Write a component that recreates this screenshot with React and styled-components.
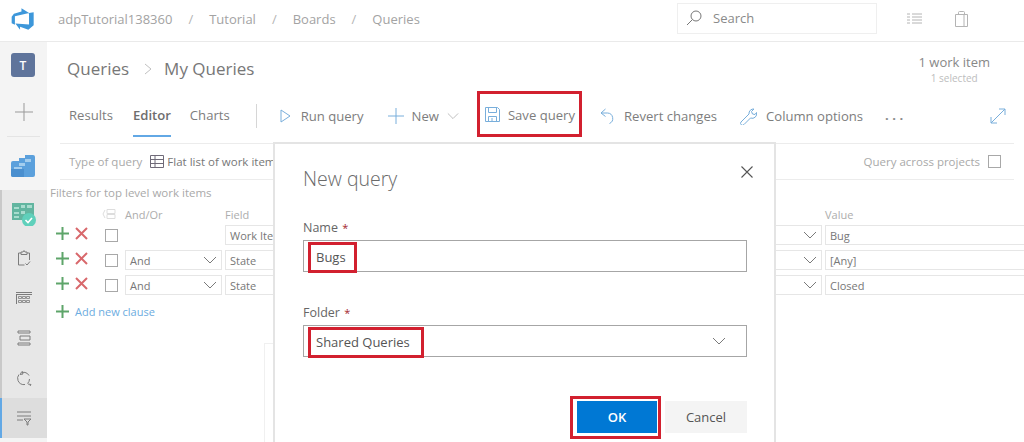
import React from 'react';
import styled, { createGlobalStyle } from 'styled-components';

const GlobalStyle = createGlobalStyle`
  html, body {
    margin: 0;
    padding: 0;
    background: #fff;
    font-family: "Open Sans", "Liberation Sans", sans-serif;
  }
  * { box-sizing: border-box; }
`;

/*********************************** Page frame ***********************************/
const Page = styled.div`
  position: relative;
  width: 1024px;
  height: 442px;
  overflow: hidden;
  background: #fff;
  display: flex;
  flex-direction: column;
`;

const TopBar = styled.header`
  height: 42px;
  flex: none;
  display: flex;
  align-items: center;
  border-bottom: 1px solid #eaeaea;
  padding: 0 56px 4px 11px;
`;

const Logo = styled.svg`
  width: 24px;
  height: 24px;
  margin-right: 23px;
  fill: #3d97da;
`;

const Crumb = styled.span`
  font-size: 13px;
  color: #a3a3a3;
`;

const CrumbSlash = styled.span`
  font-size: 13px;
  color: #b5b5b5;
  margin: 0 16px;
`;

const SearchBox = styled.div`
  width: 200px;
  height: 31px;
  margin-left: auto;
  margin-top: -1px;
  border: 1px solid #efefef;
  display: flex;
  align-items: center;
  gap: 11px;
  padding-left: 8px;
  font-size: 13px;
  color: #8a8a8a;
`;

const TopIcon = styled.svg`
  width: ${p => p.$w}px;
  height: 16px;
  margin-left: ${p => p.$left}px;
  fill: none;
  stroke: #b4b4b4;
  stroke-width: 1;
`;

const Body = styled.div`
  flex: 1;
  display: flex;
  min-height: 0;
`;

/*********************************** Sidebar ***********************************/
const Sidebar = styled.nav`
  width: 47px;
  flex: none;
  background: #f4f4f4;
  display: flex;
  flex-direction: column;
  align-items: stretch;
`;

const Avatar = styled.div`
  width: 24px;
  height: 24px;
  margin: 11px 0 0 11px;
  border-radius: 3px;
  background: #5f749b;
  color: #fff;
  font-size: 12px;
  font-weight: 600;
  display: flex;
  align-items: center;
  justify-content: center;
`;

const AddTile = styled.div`
  height: 60px;
  margin: 0 7px;
  padding-top: 10px;
  display: flex;
  align-items: center;
  justify-content: center;
  border-bottom: 1px solid #e4e4e4;
`;

const ChartTile = styled.div`
  height: 53px;
  padding: 5px 0 0 11px;
  display: flex;
  align-items: center;
`;

const SideGroup = styled.div`
  background: #e7e7e7;
  border-left: 2px solid #c9c9c9;
  display: flex;
  flex-direction: column;
`;

const SideItem = styled.div`
  height: ${p => p.$h}px;
  display: flex;
  align-items: center;
  justify-content: center;
  padding-right: 2px;
  margin-left: ${p => (p.$active ? '-2px' : '0')};
  background: ${p => (p.$active ? '#dddddd' : 'transparent')};
  border-left: ${p => (p.$active ? '2px solid #62a8e5' : 'none')};
`;

const SideIcon = styled.svg`
  width: 16px;
  height: 16px;
  fill: none;
  stroke: #7c7c7c;
  stroke-width: 1;
`;

/*********************************** Main ***********************************/
const Main = styled.main`
  flex: 1;
  min-width: 0;
  display: flex;
  flex-direction: column;
`;

const TitleRow = styled.div`
  height: 49px;
  flex: none;
  display: flex;
  justify-content: space-between;
  align-items: flex-start;
  padding: 14px 34px 0 20px;
`;

const PageTitle = styled.div`
  display: flex;
  align-items: center;
  font-size: 17px;
  color: #777;
  line-height: 26px;
`;

const TitleChevron = styled.svg`
  width: 10px;
  height: 12px;
  margin: 0 11px 0 14px;
  fill: none;
  stroke: #c0c0c0;
`;

const WorkCount = styled.div`
  text-align: center;
  margin-top: -1px;
  font-size: 13px;
  line-height: 14px;
  color: #888;
`;

const SelectedCount = styled.div`
  font-size: 10px;
  line-height: 14px;
  color: #bdbdbd;
  margin-top: 2px;
`;

const Toolbar = styled.div`
  height: 53px;
  flex: none;
  display: flex;
  align-items: center;
  margin: 0 10px 0 13px;
  padding-left: 9px;
  border-bottom: 1px solid #ececec;
  font-size: 13.1px;
  color: #7d7d7d;
`;

const Tab = styled.div`
  height: 46px;
  display: flex;
  align-items: center;
  margin-right: ${p => p.$gap}px;
  margin-top: -6px;
  padding-top: 2px;
  font-weight: ${p => (p.$active ? 600 : 400)};
  color: ${p => (p.$active ? '#6e6e6e' : '#7d7d7d')};
  border-bottom: 2px solid ${p => (p.$active ? '#62a8e5' : 'transparent')};
  border-top: 2px solid transparent;
`;

const ToolDivider = styled.div`
  width: 1px;
  height: 24px;
  margin: -2px 23px 0 0;
  background: #d6d6d6;
`;

const ToolItem = styled.div`
  display: flex;
  align-items: center;
  gap: ${p => p.$gap}px;
  margin-left: ${p => p.$left}px;
  margin-top: -6px;
  padding-top: 4px;
  height: 46px;
`;

const SaveItem = styled(ToolItem)`
  border: 3px solid #d2202f;
  padding: 1px 4px 0 5px;
`;

const ToolIcon = styled.svg`
  width: ${p => p.$size}px;
  height: ${p => p.$h || p.$size}px;
  fill: none;
  stroke: #78aedb;
  stroke-width: 1;
  flex: none;
`;

const Dots = styled.span`
  margin-left: 22px;
  margin-top: -4px;
  letter-spacing: 3.5px;
  font-weight: 700;
  font-size: 13px;
  color: #8a8a8a;
`;

const Expand = styled.svg`
  width: 16px;
  height: 16px;
  margin: -2px 8px 0 auto;
  fill: none;
  stroke: #78aedb;
  stroke-width: 1;
`;

const TypeRow = styled.div`
  height: 36px;
  flex: none;
  display: flex;
  align-items: center;
  margin: 0 10px 0 13px;
  padding: 0 13px 0 9px;
  border-bottom: 1px solid #ececec;
  font-size: 11.5px;
  color: #a9a9a9;
`;

const TypeValue = styled.span`
  display: flex;
  align-items: center;
  gap: 3px;
  margin-left: 8px;
  color: #777;
`;

const TableIcon = styled.svg`
  width: 14px;
  height: 13px;
  fill: none;
  stroke: #6f6a78;
  stroke-width: 1;
`;

const AcrossProjects = styled.span`
  margin-left: auto;
  display: flex;
  align-items: center;
  gap: 8px;
`;

const Check = styled.span`
  width: 13px;
  height: 13px;
  flex: none;
  border: 1px solid #a8a8a8;
  background: #fff;
`;

const FiltersLabel = styled.div`
  font-size: 11.5px;
  line-height: 16px;
  color: #a9a9a9;
  margin: 5px 0 0 3px;
`;

const Clauses = styled.div`
  margin-top: 3px;
  padding-left: 9px;
  font-size: 11px;
  color: #777;
`;

const ClauseRow = styled.div`
  display: grid;
  grid-template-columns: 66px 97px 275px 319px 215px;
  column-gap: 3px;
  height: 20px;
  margin-bottom: 5px;
  align-items: stretch;
`;

const HeadRow = styled(ClauseRow)`
  margin-bottom: 1px;
`;

const HeadCell = styled.div`
  display: flex;
  align-items: center;
  padding-left: ${p => p.$pad || 0}px;
  color: #adadad;
`;

const RowActions = styled.div`
  display: flex;
  align-items: center;
  padding-bottom: 4px;
`;

const RowCheck = styled(Check)`
  margin-bottom: -4px;
`;

const MiniIcon = styled.svg`
  width: 13px;
  height: 13px;
  margin-right: ${p => p.$gap}px;
  flex: none;
  fill: none;
  stroke: ${p => p.$color};
  stroke-width: 2;
`;

const Cell = styled.div`
  border: 1px solid #e6e6e6;
  padding: 0 4px;
  display: flex;
  align-items: center;
  justify-content: space-between;
  white-space: nowrap;
  overflow: hidden;
`;

const Chevron = styled.svg`
  width: ${p => p.$w || 14}px;
  height: 8px;
  flex: none;
  fill: none;
  stroke: #7a7a7a;
  stroke-width: 1;
`;

const AddClause = styled.div`
  display: flex;
  align-items: center;
  margin-top: 9px;
  color: #6cace0;
`;

const BehindPanel = styled.div`
  position: absolute;
  left: 264px;
  top: 343px;
  width: 12px;
  height: 99px;
  border-left: 1px solid #f0f0f0;
  border-top: 1px solid #f0f0f0;
`;

/*********************************** Dialog ***********************************/
const Dialog = styled.section`
  position: absolute;
  left: 273px;
  top: 142px;
  width: 503px;
  height: 300px;
  background: #fff;
  border: 2px solid #e4e4e4;
  border-bottom: none;
  padding: 20px 27px 0 28px;
  color: #666;
`;

const DialogHead = styled.div`
  display: flex;
  justify-content: space-between;
  align-items: flex-start;
  height: 55px;
`;

const DialogTitle = styled.h2`
  margin: 0;
  font-size: 19.5px;
  line-height: 30px;
  font-weight: 300;
  color: #6a6a6a;
`;

const CloseIcon = styled.svg`
  width: 12px;
  height: 12px;
  margin: 2px -6px 0 0;
  fill: none;
  stroke: #555;
  stroke-width: 1.1;
`;

const Field = styled.div`
  margin-bottom: ${p => p.$after}px;
`;

const FieldLabel = styled.label`
  display: block;
  font-size: 12.5px;
  line-height: 18px;
  margin-bottom: 3px;
  color: #666;
`;

const Required = styled.span`
  color: #a4262c;
  font-size: 11px;
  margin-left: 1px;
`;

const InputBox = styled.div`
  height: 32px;
  border: 1px solid #a6a6a6;
  display: flex;
  align-items: center;
  justify-content: space-between;
  padding: 0 19px 0 4px;
`;

const Marked = styled.span`
  height: 31px;
  margin-top: 3px;
  border: 3px solid #d2202f;
  padding: 0 ${p => p.$right}px 2px 5px;
  display: flex;
  align-items: center;
  font-size: 13px;
  color: #555;
  white-space: nowrap;
`;

const DialogFooter = styled.div`
  display: flex;
  justify-content: flex-end;
  align-items: flex-start;
  gap: 4px;
  margin-top: -3px;
`;

const OkMark = styled.div`
  border: 3px solid #d2202f;
  padding: 2px 1px 3px 4px;
`;

const OkButton = styled.button`
  width: 80px;
  height: 32px;
  border: none;
  background: #0078d4;
  color: #fff;
  font: 600 13px "Open Sans", sans-serif;
`;

const CancelButton = styled.button`
  width: 82px;
  height: 32px;
  margin-top: 5px;
  border: none;
  background: #f4f4f4;
  color: #555;
  font: 400 13px "Open Sans", sans-serif;
`;

const chevronPath = 'M1 1l6 6 6-6';

const Plus = ({ gap }) => (
  <MiniIcon viewBox="0 0 13 13" $color="#5ea56a" $gap={gap}>
    <path d="M6.5 0v13M0 6.5h13" />
  </MiniIcon>
);

const Cross = ({ gap }) => (
  <MiniIcon viewBox="0 0 13 13" $color="#d8686c" $gap={gap}>
    <path d="M1 1l11 11M12 1L1 12" />
  </MiniIcon>
);

const DownChevron = () => (
  <Chevron viewBox="0 0 14 8">
    <path d={chevronPath} />
  </Chevron>
);

const Clause = ({ andOr, field, value }) => (
  <ClauseRow>
    <RowActions>
      <Plus gap={6} />
      <Cross gap={17} />
      <RowCheck />
    </RowActions>
    {andOr ? (
      <Cell>
        {andOr}
        <DownChevron />
      </Cell>
    ) : (
      <div />
    )}
    <Cell>{field}</Cell>
    <Cell>
      <span />
      <DownChevron />
    </Cell>
    <Cell>{value}</Cell>
  </ClauseRow>
);

const SideIcons = {
  clipboard: (
    <SideIcon viewBox="0 0 16 16">
      <path d="M5 3H2.500v12h6M11 3h2.500v7M5 4.500V2h2l1-1.500L9 2h2v2.500zM9.500 13.500l1.500 1.500 3-3.500" />
    </SideIcon>
  ),
  grid: (
    <SideIcon viewBox="0 0 16 12">
      <path d="M0 .5h16M0 2.500h16M.5 3v9" />
      <path d="M2.500 4.500h3v2h-3zM6.500 4.500h3v2h-3zM10.500 4.500h3v2h-3zM2.500 8.500h3v2h-3zM6.500 8.500h3v2h-3zM10.500 8.500h3v2h-3z" strokeWidth=".8" />
    </SideIcon>
  ),
  stack: (
    <SideIcon viewBox="0 0 16 16">
      <path d="M2 1h12v2H2zM2 13h12v2H2zM4 6h10v4H4z" />
    </SideIcon>
  ),
  cycle: (
    <SideIcon viewBox="0 0 16 16">
      <path d="M4 3.500a6 6 0 0 1 9 2M13.500 9a6 6 0 0 1-2 4.500M9 14.500a6 6 0 0 1-7-4 6 6 0 0 1 1-6M6 1l1 3-3 .5M12 14l3 .5-1 1.500" />
    </SideIcon>
  ),
  filter: (
    <SideIcon viewBox="0 0 16 16">
      <path d="M1 2h14M1 6h14M1 10h6M8 9h7l-3 3v3h-1v-3z" />
    </SideIcon>
  )
};

export default function App() {
  return (
    <Page>
      <GlobalStyle />
      <TopBar>
        <Logo viewBox="0 0 18 18">
          <path d="M17 4v9.740l-4 3.280-6.200-2.260V17l-3.510-4.590 10.230.8V4.440zm-3.410.49L7.850 1v2.410L2.190 5.070.5 7.240v4.930l2.430 1.070V6.930z" />
        </Logo>
        <Crumb>adpTutorial138360</Crumb>
        <CrumbSlash>/</CrumbSlash>
        <Crumb>Tutorial</Crumb>
        <CrumbSlash>/</CrumbSlash>
        <Crumb>Boards</Crumb>
        <CrumbSlash>/</CrumbSlash>
        <Crumb>Queries</Crumb>
        <SearchBox>
          <svg width="16" height="16" viewBox="0 0 16 16" fill="none" stroke="#777">
            <circle cx="10" cy="6" r="5" />
            <path d="M6.500 9.500L1 15" />
          </svg>
          Search
        </SearchBox>
        <TopIcon viewBox="0 0 16 16" $w={16} $left={29}>
          <path d="M6 3h10M6 6h10M6 9h10M6 12h10M1 3h3M1 6h3M1 9h3M1 12h3" />
        </TopIcon>
        <TopIcon viewBox="0 0 13 16" $w={13} $left={33}>
          <path d="M.5 3.500h12v12H.5zM9 3.500v12M3.500 3.500V1.500q0-1 1-1h4q1 0 1 1v2" />
        </TopIcon>
      </TopBar>
      <Body>
        <Sidebar>
          <Avatar>T</Avatar>
          <AddTile>
            <svg width="20" height="20" viewBox="0 0 20 20" fill="none" stroke="#999">
              <path d="M10 1v18M1 10h18" />
            </svg>
          </AddTile>
          <ChartTile>
            <svg width="24" height="22" viewBox="0 0 24 22">
              <path d="M0 8q0-2 2-2h6V3h6V0h8q2 0 2 2v18q0 2-2 2H2q-2 0-2-2z" fill="#5ba0dc" />
              <path d="M0 14h13v8H2q-2 0-2-2z" fill="#4a8fcf" />
              <path d="M8 8h6v3H8zM14 4h6v3h-6zM3 12h8v2H3z" fill="#a3cdee" />
            </svg>
          </ChartTile>
          <SideGroup>
            <SideItem $h={48}>
              <svg width="24" height="24" viewBox="0 0 24 24">
                <rect y="1" width="22" height="17" fill="#62b5a0" />
                <path d="M2 5h5v2H2zM9 3h4v3H9zM15 3h5v3h-5zM2 10h5v2H2zM2 14h5v2H2zM9 9h4v3H9z" fill="#a8dcce" />
                <circle cx="17" cy="18" r="7" fill="#5fd0bb" />
                <path d="M13.500 18l2.500 2.500 4-4.500" fill="none" stroke="#fff" strokeWidth="1.6" />
              </svg>
            </SideItem>
            <SideItem $h={40}>{SideIcons.clipboard}</SideItem>
            <SideItem $h={40}>{SideIcons.grid}</SideItem>
            <SideItem $h={40}>{SideIcons.stack}</SideItem>
            <SideItem $h={40}>{SideIcons.cycle}</SideItem>
            <SideItem $h={40} $active>
              {SideIcons.filter}
            </SideItem>
          </SideGroup>
        </Sidebar>
        <Main>
          <TitleRow>
            <PageTitle>
              Queries
              <TitleChevron viewBox="0 0 10 12">
                <path d="M2 1l6 5-6 5" />
              </TitleChevron>
              My Queries
            </PageTitle>
            <WorkCount>
              1 work item
              <SelectedCount>1 selected</SelectedCount>
            </WorkCount>
          </TitleRow>
          <Toolbar>
            <Tab $gap={20}>Results</Tab>
            <Tab $gap={19} $active>
              Editor
            </Tab>
            <Tab $gap={26}>Charts</Tab>
            <ToolDivider />
            <ToolItem $gap={10} $left={0}>
              <ToolIcon viewBox="0 0 11 14" $size={11} $h={14}>
                <path d="M1 1l9 6-9 6z" />
              </ToolIcon>
              Run query
            </ToolItem>
            <ToolItem $gap={8} $left={24}>
              <ToolIcon viewBox="0 0 16 16" $size={16}>
                <path d="M8 0v16M0 8h16" />
              </ToolIcon>
              New
              <Chevron viewBox="0 0 14 8" $w={12}>
                <path d={chevronPath} stroke="#b5b5b5" />
              </Chevron>
            </ToolItem>
            <SaveItem $gap={8} $left={18}>
              <ToolIcon viewBox="0 0 15 15" $size={15}>
                <path d="M.5.5h12l2 2v12H.5zM3.500.5v5h8v-5M3.500 14.500v-5h8v5M7 11v3" />
              </ToolIcon>
              Save query
            </SaveItem>
            <ToolItem $gap={10} $left={18}>
              <ToolIcon viewBox="0 0 14 16" $size={14} $h={16}>
                <path d="M5.500 1L1 5l4.500 3.500M1 5h6.500a5.500 5.500 0 0 1 2 10.500" />
              </ToolIcon>
              Revert changes
            </ToolItem>
            <ToolItem $gap={9} $left={23}>
              <ToolIcon viewBox="0 0 17 17" $size={17}>
                <path d="M1 14l8-8a4.500 4.500 0 0 1 5-5l-2.500 2.500 1 2.500 2.500.5 1.500-2a4.500 4.500 0 0 1-6 5.500l-6.500 6.500a1.800 1.800 0 0 1-3-2.500z" />
              </ToolIcon>
              Column options
            </ToolItem>
            <Dots>...</Dots>
            <Expand viewBox="0 0 16 16">
              <path d="M1 15L15 1M9 1h6v6M1 9v6h6" />
            </Expand>
          </Toolbar>
          <TypeRow>
            Type of query
            <TypeValue>
              <TableIcon viewBox="0 0 14 13">
                <path d="M.5.5h13v12H.5zM.5 4.500h13M.5 8.500h13M5 .5v12" />
              </TableIcon>
              Flat list of work items
            </TypeValue>
            <AcrossProjects>
              Query across projects
              <Check />
            </AcrossProjects>
          </TypeRow>
          <FiltersLabel>Filters for top level work items</FiltersLabel>
          <Clauses>
            <HeadRow>
              <HeadCell $pad={46}>
                <svg width="14" height="10" viewBox="0 0 14 10" fill="none" stroke="#ddd">
                  <path d="M5 .5h8v4H5zM5 5.500h8v4H5zM3 1L1 5l2 4" />
                </svg>
              </HeadCell>
              <HeadCell>And/Or</HeadCell>
              <HeadCell>Field</HeadCell>
              <div />
              <HeadCell>Value</HeadCell>
            </HeadRow>
            <Clause field="Work Item Type" value="Bug" />
            <Clause andOr="And" field="State" value="[Any]" />
            <Clause andOr="And" field="State" value="Closed" />
            <AddClause>
              <Plus gap={6} />
              Add new clause
            </AddClause>
          </Clauses>
        </Main>
      </Body>
      <BehindPanel />
      <Dialog>
        <DialogHead>
          <DialogTitle>New query</DialogTitle>
          <CloseIcon viewBox="0 0 12 12">
            <path d="M.5.5l11 11M11.500.5l-11 11" />
          </CloseIcon>
        </DialogHead>
        <Field $after={32}>
          <FieldLabel>
            Name <Required>*</Required>
          </FieldLabel>
          <InputBox>
            <Marked $right={8}>Bugs</Marked>
          </InputBox>
        </Field>
        <Field $after={42}>
          <FieldLabel>
            Folder <Required>*</Required>
          </FieldLabel>
          <InputBox>
            <Marked $right={11}>Shared Queries</Marked>
            <Chevron viewBox="0 0 14 8" $w={16}>
              <path d={chevronPath} />
            </Chevron>
          </InputBox>
        </Field>
        <DialogFooter>
          <OkMark>
            <OkButton>OK</OkButton>
          </OkMark>
          <CancelButton>Cancel</CancelButton>
        </DialogFooter>
      </Dialog>
    </Page>
  );
}
